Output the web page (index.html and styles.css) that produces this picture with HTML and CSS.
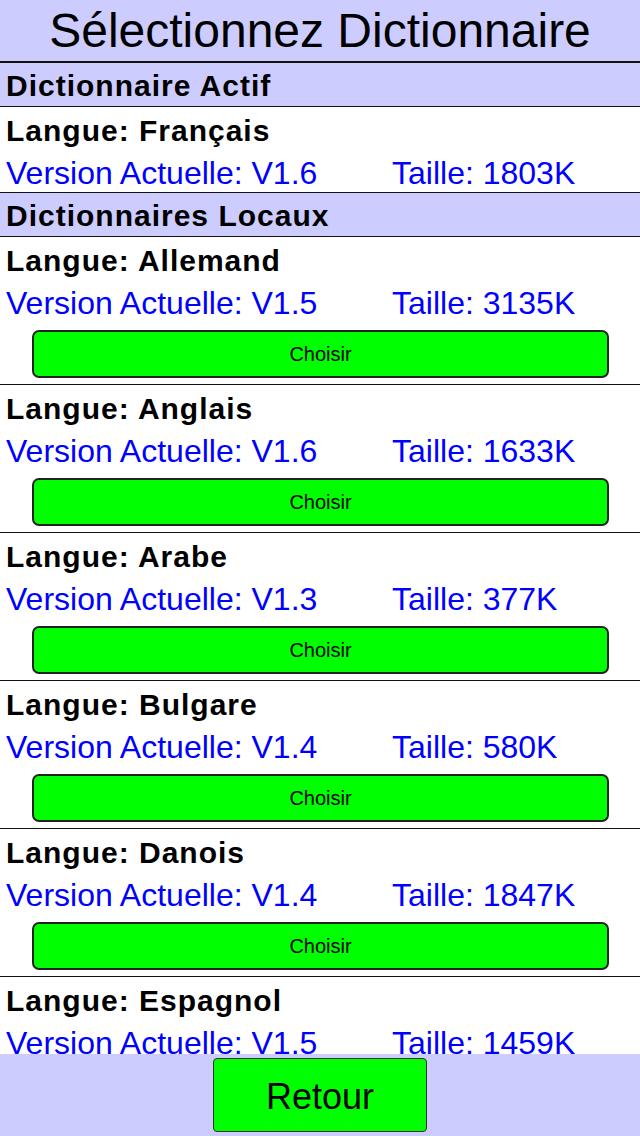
FILE: index.html
```html
<!doctype html>
<html>

<head>
	<title>Sélectionnez Dictionnaire</title>
	<link rel="stylesheet" href="styles.css">
</head>

<body>
	<div id='header'>
		<p id='title'>Sélectionnez Dictionnaire</p>
	</div>
	<div id='dict-list'>
		<div class='section-title'>Dictionnaire Actif</div>
		<div class='dict-item active'>
			<div class='dict-name'>Langue: Français</div>
			<div class='dict-info'><span>Version Actuelle: V1.6</span><span>Taille: 1803K</span></div>
		</div>
		<div class='section-title'>Dictionnaires Locaux</div>
		<div class='dict-item'>
			<div class='dict-name'>Langue: Allemand</div>
			<div class='dict-info'><span>Version Actuelle: V1.5</span><span>Taille: 3135K</span></div>
			<button class='choose-button'>Choisir</button>
		</div>
		<div class='dict-item'>
			<div class='dict-name'>Langue: Anglais</div>
			<div class='dict-info'><span>Version Actuelle: V1.6</span><span>Taille: 1633K</span></div>
			<button class='choose-button'>Choisir</button>
		</div>
		<div class='dict-item'>
			<div class='dict-name'>Langue: Arabe</div>
			<div class='dict-info'><span>Version Actuelle: V1.3</span><span>Taille: 377K</span></div>
			<button class='choose-button'>Choisir</button>
		</div>
		<div class='dict-item'>
			<div class='dict-name'>Langue: Bulgare</div>
			<div class='dict-info'><span>Version Actuelle: V1.4</span><span>Taille: 580K</span></div>
			<button class='choose-button'>Choisir</button>
		</div>
		<div class='dict-item'>
			<div class='dict-name'>Langue: Danois</div>
			<div class='dict-info'><span>Version Actuelle: V1.4</span><span>Taille: 1847K</span></div>
			<button class='choose-button'>Choisir</button>
		</div>
		<div class='dict-item'>
			<div class='dict-name'>Langue: Espagnol</div>
			<div class='dict-info'><span>Version Actuelle: V1.5</span><span>Taille: 1459K</span></div>
			<button class='choose-button'>Choisir</button>
		</div>
	</div>
	<div id='footer'>
		<button id='back-button'>Retour</button>
	</div>
</body>

</html>
```

FILE: styles.css
```css
html, body {
	margin: 0;
	padding: 0;
	width: 100%;
	height: 100%;
	display: flex;
	flex-direction: column;
	font-family: 'Liberation Sans', Arial, sans-serif;
	color: #000;
	background-color: #fff;
}

#header {
	flex: none;
	height: 61px;
	background-color: #ccccff;
	border-bottom: 2px solid #111;
}
#title {
	margin: 0;
	font-size: 48px;
	line-height: 61px;
	text-align: center;
}

#dict-list {
	flex: 1;
	overflow: hidden;
}
.section-title {
	height: 43px;
	padding-left: 6px;
	background-color: #ccccff;
	border-bottom: 1px solid #111;
	font-size: 30px;
	font-weight: bold;
	letter-spacing: 1px;
	line-height: 45px;
}
.dict-item {
	display: flex;
	flex-direction: column;
	padding-bottom: 6px;
	border-bottom: 1px solid #111;
}
.dict-item.active {
	padding-bottom: 1px;
}
.dict-name {
	padding-left: 6px;
	height: 42px;
	font-size: 30px;
	font-weight: bold;
	letter-spacing: 1px;
	line-height: 48px;
}
.dict-info {
	display: grid;
	grid-template-columns: 386px auto;
	padding-left: 6px;
	height: 42px;
	font-size: 32px;
	line-height: 48px;
	color: #0000ff;
}
.choose-button {
	margin: 9px 31px 0 32px;
	height: 48px;
	background-color: #00ff00;
	border: 2px solid #222;
	border-radius: 7px;
	font-family: 'Liberation Sans', Arial, sans-serif;
	font-size: 20px;
	color: #000;
	padding: 1px 0 0;
}

#footer {
	flex: none;
	height: 82px;
	display: flex;
	justify-content: center;
	align-items: flex-start;
	background-color: #ccccff;
}
#back-button {
	margin-top: 4px;
	width: 214px;
	height: 74px;
	padding: 3px 0 0;
	background-color: #00ff00;
	border: 1px solid #333;
	border-radius: 4px;
	font-family: 'Liberation Sans', Arial, sans-serif;
	font-size: 36px;
	color: #000;
}
```
